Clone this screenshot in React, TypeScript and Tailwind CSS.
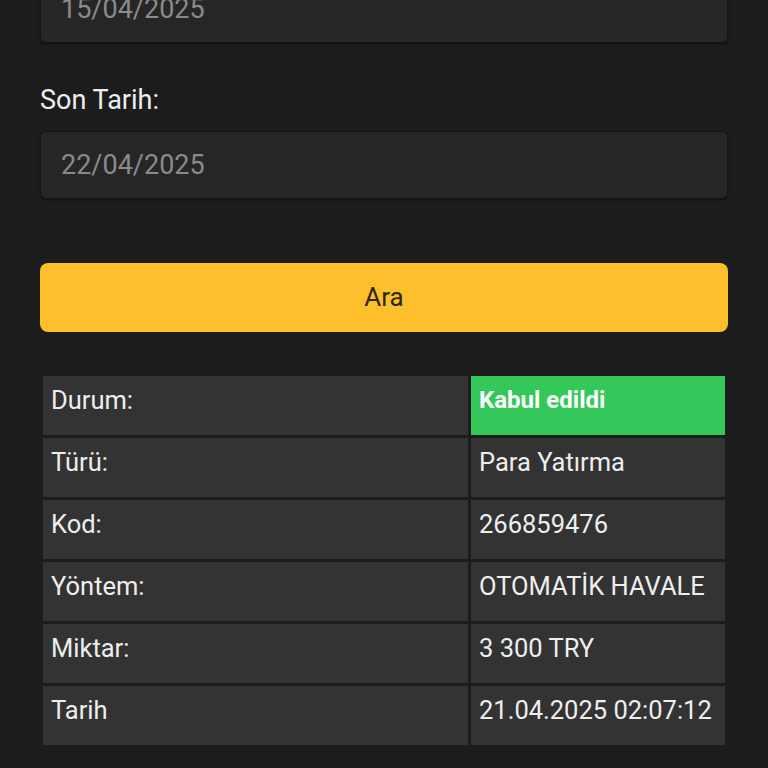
import React from "react";

const rows: { label: string; value: string; status?: boolean }[] = [
  { label: "Durum:", value: "Kabul edildi", status: true },
  { label: "Türü:", value: "Para Yatırma" },
  { label: "Kod:", value: "266859476" },
  { label: "Yöntem:", value: "OTOMATİK HAVALE" },
  { label: "Miktar:", value: "3 300 TRY" },
  { label: "Tarih", value: "21.04.2025 02:07:12" },
];

function DateInput({ value, className = "" }: { value: string; className?: string }) {
  return (
    <div
      className={`h-[68px] flex items-center px-5 rounded-md bg-[#262626] border border-[#151515] shadow-[0_1px_2px_rgba(0,0,0,0.5)] text-[27px] text-[#8a8a8a] ${className}`}
    >
      {value}
    </div>
  );
}

export default function App() {
  return (
    <div
      className="h-screen overflow-hidden bg-[#1c1c1c] px-10 text-[#eeeeee]"
      style={{ fontFamily: "Roboto, 'Noto Sans', sans-serif" }}
    >
      {/* Başlangıç tarihi (üstte kesik) */}
      <DateInput value="15/04/2025" className="-mt-[25px]" />

      <div className="mt-[42px] mb-4 text-[27px] leading-[30px]">Son Tarih:</div>
      <DateInput value="22/04/2025" />

      <button className="mt-16 w-full h-[69px] rounded-lg bg-[#fdbf2c] text-[#2b2613] text-[26px] flex items-center justify-center">
        Ara
      </button>

      <table className="mt-[41px] w-full border-separate border-spacing-[3px] text-[25.5px] leading-[30px]">
        <tbody>
          {rows.map((r) => (
            <tr key={r.label}>
              <td className="w-[425px] h-[59px] align-top bg-[#333333] px-2 pt-[9px]">{r.label}</td>
              <td
                className={`h-[59px] align-top px-2 pt-[9px] ${
                  r.status ? "bg-[#34c85a] font-bold text-[24px] text-white" : "bg-[#333333]"
                }`}
              >
                {r.value}
              </td>
            </tr>
          ))}
        </tbody>
      </table>
    </div>
  );
}
